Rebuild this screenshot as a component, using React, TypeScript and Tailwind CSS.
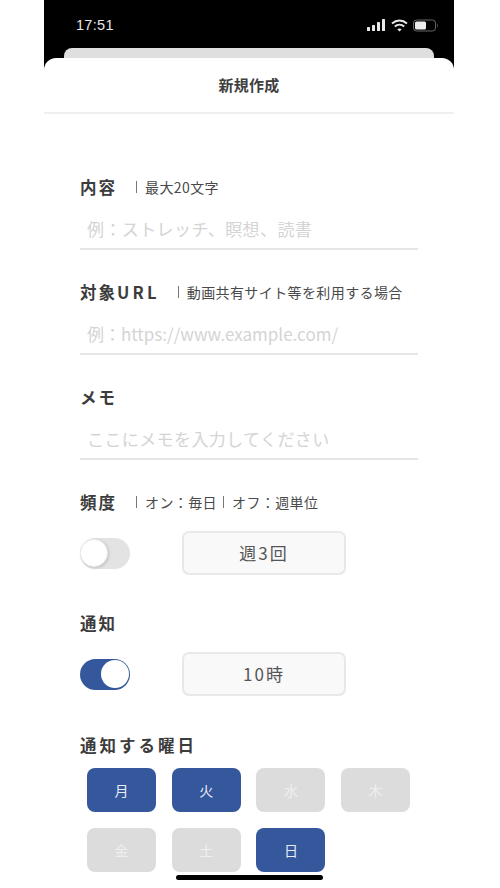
const font = { fontFamily: '"Noto Sans CJK JP", "Noto Sans", sans-serif' };

function Note({ children, gap }: { children: React.ReactNode; gap: string }) {
  return (
    <span className={`flex items-center text-[14px] leading-[20px] tracking-[0.4px] text-[#4a4a4a] whitespace-nowrap pb-[2px] ${gap}`}>
      <span className="w-px h-[12px] bg-[#777777] mr-[8px]" />
      {children}
    </span>
  );
}

function Label({ children, notes }: { children: React.ReactNode; notes?: React.ReactNode }) {
  return (
    <div className="flex items-center h-[20px]">
      <span className="text-[16.5px] leading-[20px] font-bold text-[#3c3c3c] tracking-[2px] pb-[2px]">{children}</span>
      {notes}
    </div>
  );
}

function Field({ placeholder, latin }: { placeholder: string; latin?: boolean }) {
  return (
    <div className="h-[52px] border-b-2 border-[#e6e6e6] pt-[16px] pl-[7px]">
      <span className={`block text-[17px] leading-[30px] text-[#d4d4d4] whitespace-nowrap ${latin ? "" : "tracking-[0.4px]"}`}>{placeholder}</span>
    </div>
  );
}

function Toggle({ on }: { on?: boolean }) {
  return (
    <div className={`w-[50px] h-[31px] rounded-full flex items-center ${on ? "bg-[#35589c] justify-end pr-[1px]" : "bg-[#e3e3e3] justify-start"}`}>
      <div className={`w-[28px] h-[28px] rounded-full bg-white ${on ? "" : "border border-[#ececec] shadow-[1px_1px_3px_rgba(0,0,0,0.15)]"}`} />
    </div>
  );
}

function ValueButton({ children }: { children: React.ReactNode }) {
  return (
    <div className="w-[164px] h-[44px] rounded-[7px] border-2 border-[#e8e8e8] bg-[#f9f9f9] flex items-center justify-center text-[17px] text-[#555555] tracking-[2px]">
      {children}
    </div>
  );
}

function Day({ label, on }: { label: string; on?: boolean }) {
  return (
    <div className={`w-[69px] h-[44px] rounded-[8px] flex items-center justify-center text-[14px] ${on ? "bg-[#35589c] text-[#e8ecf5]" : "bg-[#dcdcdc] text-[#efefef]"}`}>
      {label}
    </div>
  );
}

export default function App() {
  return (
    <div className="w-[500px] h-[888px] overflow-hidden bg-white relative" style={font}>
      <div className="ml-[44px] w-[410px] h-[888px] flex flex-col bg-black">
        <div className="h-[48px] shrink-0 pl-[32px] pr-[15px] pt-[14px] flex justify-between items-start text-white">
          <span className="text-[14.5px] leading-[22px] text-[#e8e8e8] tracking-[0.3px]" style={{ fontFamily: '"Liberation Sans", sans-serif' }}>17:51</span>
          <div className="flex items-center gap-[5px] h-[22px]">
            <svg width="19" height="12" viewBox="0 0 19 12" fill="#e8e8e8">
              <rect x="0" y="8" width="3" height="4" rx="0.6" />
              <rect x="5" y="6" width="3" height="6" rx="0.6" />
              <rect x="10" y="3" width="3" height="9" rx="0.6" />
              <rect x="15" y="0" width="3" height="12" rx="0.6" />
            </svg>
            <svg width="17" height="13" viewBox="0 0 17 13" fill="none" stroke="#e8e8e8" strokeWidth="2">
              <path d="M1 4.5C5.5 0.5 11.5 0.5 16 4.5" />
              <path d="M3.8 7.5C6.5 5.2 10.5 5.2 13.2 7.5" />
              <path d="M8.5 12.5L6.3 10.2C7.5 9.2 9.5 9.2 10.7 10.2Z" fill="#e8e8e8" stroke="none" />
            </svg>
            <svg width="26" height="13" viewBox="0 0 26 13" fill="none">
              <rect x="0.5" y="1" width="22" height="11" rx="3" stroke="#666666" />
              <rect x="2" y="2.5" width="11" height="8" rx="1.5" fill="#ececec" />
              <path d="M24 4.5C25 5 25 8 24 8.5Z" fill="#666666" />
            </svg>
          </div>
        </div>
        <div className="mx-[20px] h-[20px] shrink-0 rounded-t-[8px] bg-[#dfdfdf]" />
        <div className="-mt-[10px] flex-1 rounded-t-[12px] bg-white flex flex-col relative">
          <div className="h-[56px] shrink-0 border-b-2 border-[#efefef] flex items-center justify-center text-[15px] font-bold text-[#3f3f3f] tracking-[0.3px]">
            新規作成
          </div>
          <div className="px-[36px] pt-[64px]">
            <Label notes={<Note gap="ml-[19px]">最大20文字</Note>}>内容</Label>
            <Field placeholder="例：ストレッチ、瞑想、読書" />
            <div className="mt-[33px]">
              <Label notes={<Note gap="ml-[18px]">動画共有サイト等を利用する場合</Note>}>
                対象<span className="tracking-[3.2px]">URL</span>
              </Label>
              <Field placeholder="例：https://www.example.com/" latin />
            </div>
            <div className="mt-[33px]">
              <Label>メモ</Label>
              <Field placeholder="ここにメモを入力してください" />
            </div>
            <div className="mt-[33px]">
              <Label
                notes={
                  <>
                    <Note gap="ml-[19px]">オン：毎日</Note>
                    <Note gap="ml-[6px]">オフ：週単位</Note>
                  </>
                }
              >
                頻度
              </Label>
              <div className="mt-[18px] flex items-center gap-[52px]">
                <Toggle />
                <ValueButton>週3回</ValueButton>
              </div>
            </div>
            <div className="mt-[39px]">
              <Label>通知</Label>
              <div className="mt-[18px] flex items-center gap-[52px]">
                <Toggle on />
                <ValueButton>10時</ValueButton>
              </div>
            </div>
            <div className="mt-[40px]">
              <Label><span className="tracking-[3px]">通知する曜日</span></Label>
              <div className="mt-[12px] ml-[7px] grid grid-cols-[69px_69px_69px_69px] gap-x-[15.7px] gap-y-[16px]">
                <Day label="月" on />
                <Day label="火" on />
                <Day label="水" />
                <Day label="木" />
                <Day label="金" />
                <Day label="土" />
                <Day label="日" on />
              </div>
            </div>
          </div>
        </div>
      </div>
      <div className="absolute left-[176px] top-[875px] w-[147px] h-[5px] rounded-full bg-black" />
    </div>
  );
}
